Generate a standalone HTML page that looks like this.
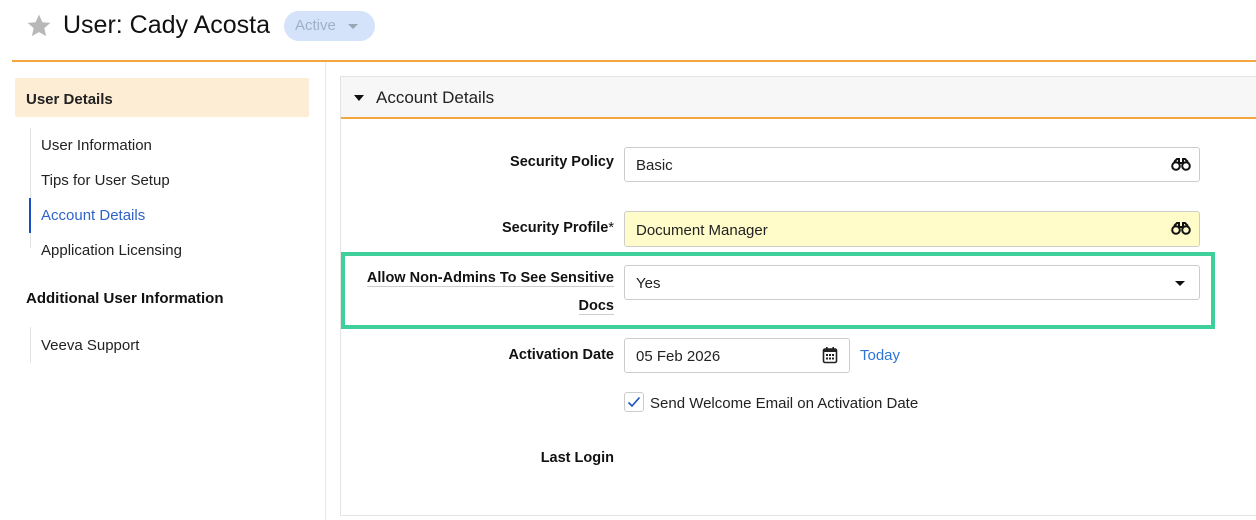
<!DOCTYPE html>
<html><head><style>
*{margin:0;padding:0;box-sizing:border-box}
body{width:1256px;height:520px;overflow:hidden;background:#fff;font-family:"Liberation Sans",Arial,sans-serif;color:#222;position:relative}
.a{position:absolute}
.lbl{position:absolute;right:642px;font-size:14.5px;font-weight:bold;text-align:right;color:#111}
.inp{position:absolute;left:624px;border:1px solid #ccc;border-radius:3px;background:#fff;font-size:15px;padding-left:11px;padding-top:2px;display:flex;align-items:center}
.nav{position:absolute;left:41px;font-size:15px;color:#222}
</style></head><body>
<svg class="a" style="left:26px;top:13px" width="26" height="26" viewBox="0 0 24 24"><path d="M12 1.5l3.2 7 7.3.6-5.6 4.9 1.7 7.4L12 17.6l-6.6 3.8 1.7-7.4L1.5 9.1l7.3-.6z" fill="#b8b8b8"/></svg>
<div class="a" style="left:63px;top:11px;font-size:25px;color:#111">User: Cady Acosta</div>
<div class="a" style="left:284px;top:11px;width:91px;height:30px;border-radius:15px;background:#d4e3fa;color:#9fb0c8;font-size:15px;padding:6px 0 0 11px">Active<span style="position:absolute;left:64px;top:13px;border:5px solid transparent;border-top:5px solid #9aa5b5;border-bottom:0"></span></div>
<div class="a" style="left:12px;top:60px;width:1244px;height:2px;background:#f4a640"></div>
<div class="a" style="left:325px;top:62px;width:1px;height:458px;background:#e6e6e6"></div>
<div class="a" style="left:15px;top:78px;width:294px;height:39px;background:#fdedd4;border-radius:2px;font-weight:bold;font-size:15px;padding:13px 0 0 11px">User Details</div>
<div class="a" style="left:30px;top:128px;width:1px;height:120px;background:#e2e2e2"></div>
<div class="a" style="left:29px;top:198px;width:2px;height:35px;background:#1a4fc4"></div>
<div class="nav" style="top:137px">User Information</div>
<div class="nav" style="top:172px">Tips for User Setup</div>
<div class="nav" style="top:207px;color:#2f63c9">Account Details</div>
<div class="nav" style="top:242px">Application Licensing</div>
<div class="a" style="left:26px;top:290px;font-size:15px;font-weight:bold;color:#111">Additional User Information</div>
<div class="a" style="left:30px;top:327px;width:1px;height:36px;background:#e2e2e2"></div>
<div class="nav" style="top:337px">Veeva Support</div>
<div class="a" style="left:340px;top:76px;width:920px;height:440px;border:1px solid #e4e4e4"></div>
<div class="a" style="left:341px;top:77px;width:915px;height:40px;background:#f7f7f7"></div>
<div class="a" style="left:341px;top:117px;width:915px;height:2px;background:#f4a640"></div>
<div class="a" style="left:354px;top:95px;border:5px solid transparent;border-top:6px solid #111;border-bottom:0"></div>
<div class="a" style="left:376px;top:88px;font-size:17px;color:#222">Account Details</div>
<div class="lbl" style="top:154px">Security Policy</div>
<div class="inp" style="top:147px;width:576px;height:35px">Basic</div>
<div class="lbl" style="top:220px">Security Profile<span style="font-weight:normal">*</span></div>
<div class="inp" style="top:211px;width:576px;height:36px;background:#fffcca">Document Manager</div>
<svg class="a" style="left:1171px;top:157px" width="20" height="14" viewBox="0 0 20 14"><circle cx="5" cy="9" r="3.8" fill="none" stroke="#111" stroke-width="2"/><circle cx="15" cy="9" r="3.8" fill="none" stroke="#111" stroke-width="2"/><path d="M3 5L6 2h2v4h4V2h2l3 3" fill="none" stroke="#111" stroke-width="2"/></svg>
<svg class="a" style="left:1171px;top:221px" width="20" height="14" viewBox="0 0 20 14"><circle cx="5" cy="9" r="3.8" fill="none" stroke="#111" stroke-width="2"/><circle cx="15" cy="9" r="3.8" fill="none" stroke="#111" stroke-width="2"/><path d="M3 5L6 2h2v4h4V2h2l3 3" fill="none" stroke="#111" stroke-width="2"/></svg>
<div class="a" style="left:341px;top:252px;width:874px;height:77px;border:4px solid #3ecf9b"></div>
<div class="lbl" style="top:264px;line-height:28px"><span style="border-bottom:1px solid #ccc">Allow Non-Admins To See Sensitive</span><br><span style="border-bottom:1px solid #ccc">Docs</span></div>
<div class="inp" style="top:265px;width:576px;height:35px">Yes<span style="position:absolute;right:14px;top:15px;border:5px solid transparent;border-top:5px solid #111;border-bottom:0"></span></div>
<div class="lbl" style="top:347px">Activation Date</div>
<div class="inp" style="top:338px;width:226px;height:35px">05 Feb 2026</div>
<svg class="a" style="left:822px;top:346px" width="16" height="18" viewBox="0 0 16 18"><rect x="1.5" y="3" width="13" height="13.5" rx="1.5" fill="none" stroke="#222" stroke-width="1.6"/><rect x="1.5" y="3" width="13" height="3" fill="#222"/><rect x="4" y="1" width="1.6" height="3" fill="#222"/><rect x="10.4" y="1" width="1.6" height="3" fill="#222"/><g fill="#222"><rect x="4" y="8" width="2" height="2"/><rect x="7" y="8" width="2" height="2"/><rect x="10" y="8" width="2" height="2"/><rect x="4" y="11.5" width="2" height="2"/><rect x="7" y="11.5" width="2" height="2"/><rect x="10" y="11.5" width="2" height="2"/></g></svg>
<div class="a" style="left:860px;top:347px;font-size:15px;color:#2f75d6">Today</div>
<div class="a" style="left:624px;top:392px;width:20px;height:20px;border:1px solid #ccc;border-radius:3px"></div>
<svg class="a" style="left:627px;top:396px" width="14" height="12" viewBox="0 0 14 12"><path d="M1.5 6.5l3.5 3.5 7.5-8.5" fill="none" stroke="#1a4fc4" stroke-width="1.6"/></svg>
<div class="a" style="left:650px;top:395px;font-size:15px;color:#222">Send Welcome Email on Activation Date</div>
<div class="lbl" style="top:450px">Last Login</div>
</body></html>
